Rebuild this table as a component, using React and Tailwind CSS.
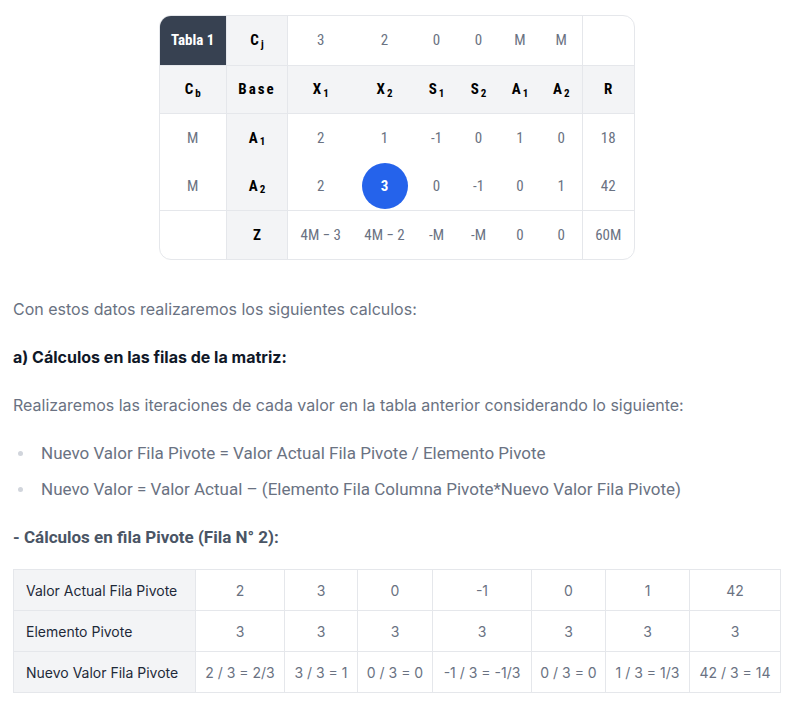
import React from "react";

const cond = "font-['Roboto_Condensed','Liberation_Sans_Narrow',Roboto,sans-serif] [font-stretch:condensed]";

const Sub = ({ b, s }) => (
  <span>
    {b}
    <sub className="text-[11px] ml-[2px]">{s}</sub>
  </span>
);

const widths = [67, 61, 66, 62, 42, 42, 41, 42, 51];

const pivotRows = [
  ["Valor Actual Fila Pivote", "2", "3", "0", "-1", "0", "1", "42"],
  ["Elemento Pivote", "3", "3", "3", "3", "3", "3", "3"],
  ["Nuevo Valor Fila Pivote", "2 / 3 = 2/3", "3 / 3 = 1", "0 / 3 = 0", "-1 / 3 = -1/3", "0 / 3 = 0", "1 / 3 = 1/3", "42 / 3 = 14"],
];
const pivotWidths = [182, 89, 73, 75, 99, 74, 84, 91];

const App = () => {
  const td = "text-center text-[15px] text-gray-500 p-0";
  const hd = "text-center text-[15px] font-bold text-black p-0";
  return (
    <div className="bg-white w-[793px] min-h-[708px] px-[13px] pt-[15px] font-['Inter',sans-serif]">
      <div className="flex justify-center">
        <div className={`border border-gray-200 rounded-xl overflow-hidden ${cond}`}>
          <table className="border-collapse table-fixed w-[474px]">
            <colgroup>
              {widths.map((w, i) => (
                <col key={i} style={{ width: w }} />
              ))}
            </colgroup>
            <tbody>
              <tr className="h-[49px] border-b border-gray-200">
                <td className="bg-[#374151] text-white font-bold text-center text-[15px] border-r border-gray-200">Tabla 1</td>
                <td className={`${hd} bg-gray-100 border-r border-gray-200`}><Sub b="C" s="j" /></td>
                <td className={td}>3</td>
                <td className={td}>2</td>
                <td className={td}>0</td>
                <td className={td}>0</td>
                <td className={td}>M</td>
                <td className={td}>M</td>
                <td className={`${td} border-l border-gray-200`}></td>
              </tr>
              <tr className="h-12 border-b border-gray-200 bg-gray-100">
                <td className={`${hd} border-r border-gray-200`}><Sub b="C" s="b" /></td>
                <td className={`${hd} tracking-[2px] border-r border-gray-200`}>Base</td>
                <td className={hd}><Sub b="X" s="1" /></td>
                <td className={hd}><Sub b="X" s="2" /></td>
                <td className={hd}><Sub b="S" s="1" /></td>
                <td className={hd}><Sub b="S" s="2" /></td>
                <td className={hd}><Sub b="A" s="1" /></td>
                <td className={hd}><Sub b="A" s="2" /></td>
                <td className={`${hd} border-l border-gray-200`}>R</td>
              </tr>
              <tr className="h-[49px]">
                <td className={`${td} border-r border-gray-200`}>M</td>
                <td className={`${hd} bg-gray-100 border-r border-gray-200`}><Sub b="A" s="1" /></td>
                <td className={td}>2</td>
                <td className={td}>1</td>
                <td className={td}>-1</td>
                <td className={td}>0</td>
                <td className={td}>1</td>
                <td className={td}>0</td>
                <td className={`${td} border-l border-gray-200`}>18</td>
              </tr>
              <tr className="h-12 border-b border-gray-200">
                <td className={`${td} border-r border-gray-200`}>M</td>
                <td className={`${hd} bg-gray-100 border-r border-gray-200`}><Sub b="A" s="2" /></td>
                <td className={td}>2</td>
                <td className={td}>
                  <span className="mx-auto flex items-center justify-center w-[46px] h-[46px] rounded-full bg-[#2563eb] text-white font-bold">3</span>
                </td>
                <td className={td}>0</td>
                <td className={td}>-1</td>
                <td className={td}>0</td>
                <td className={td}>1</td>
                <td className={`${td} border-l border-gray-200`}>42</td>
              </tr>
              <tr className="h-[49px]">
                <td className={`${td} border-r border-gray-200`}></td>
                <td className={`${hd} bg-gray-100 border-r border-gray-200`}>Z</td>
                <td className={td}>4M − 3</td>
                <td className={td}>4M − 2</td>
                <td className={td}>-M</td>
                <td className={td}>-M</td>
                <td className={td}>0</td>
                <td className={td}>0</td>
                <td className={`${td} border-l border-gray-200`}>60M</td>
              </tr>
            </tbody>
          </table>
        </div>
      </div>

      <p className="mt-[37px] text-[16px] leading-6 text-gray-500">Con estos datos realizaremos los siguientes calculos:</p>
      <p className="mt-6 text-[16px] leading-6 font-bold text-gray-900">a) Cálculos en las filas de la matriz:</p>
      <p className="mt-6 text-[16px] leading-6 text-gray-500">Realizaremos las iteraciones de cada valor en la tabla anterior considerando lo siguiente:</p>
      <ul className="mt-6 flex flex-col gap-3 text-[17px] leading-6 text-gray-500 font-['Roboto',sans-serif]">
        <li className="flex items-center">
          <span className="w-[5px] h-[5px] rounded-full bg-gray-300 ml-[5px] mr-[18px]"></span>
          Nuevo Valor Fila Pivote = Valor Actual Fila Pivote / Elemento Pivote
        </li>
        <li className="flex items-center">
          <span className="w-[5px] h-[5px] rounded-full bg-gray-300 ml-[5px] mr-[18px]"></span>
          Nuevo Valor = Valor Actual – (Elemento Fila Columna Pivote*Nuevo Valor Fila Pivote)
        </li>
      </ul>
      <p className="mt-6 text-[17px] leading-6 font-bold text-gray-600 font-['Roboto',sans-serif]">- Cálculos en fila Pivote (Fila N° 2):</p>

      <table className="mt-5 w-[767px] border-collapse table-fixed text-[14px]">
        <colgroup>
          {pivotWidths.map((w, i) => (
            <col key={i} style={{ width: w }} />
          ))}
        </colgroup>
        <tbody>
          {pivotRows.map((row, r) => (
            <tr key={r}>
              {row.map((c, i) =>
                i === 0 ? (
                  <td key={i} className="h-[41px] border border-gray-200 bg-gray-100 pl-3 text-gray-800">{c}</td>
                ) : (
                  <td key={i} className="h-[41px] border border-gray-200 text-center text-gray-500">{c}</td>
                )
              )}
            </tr>
          ))}
        </tbody>
      </table>
    </div>
  );
};

export default App;
